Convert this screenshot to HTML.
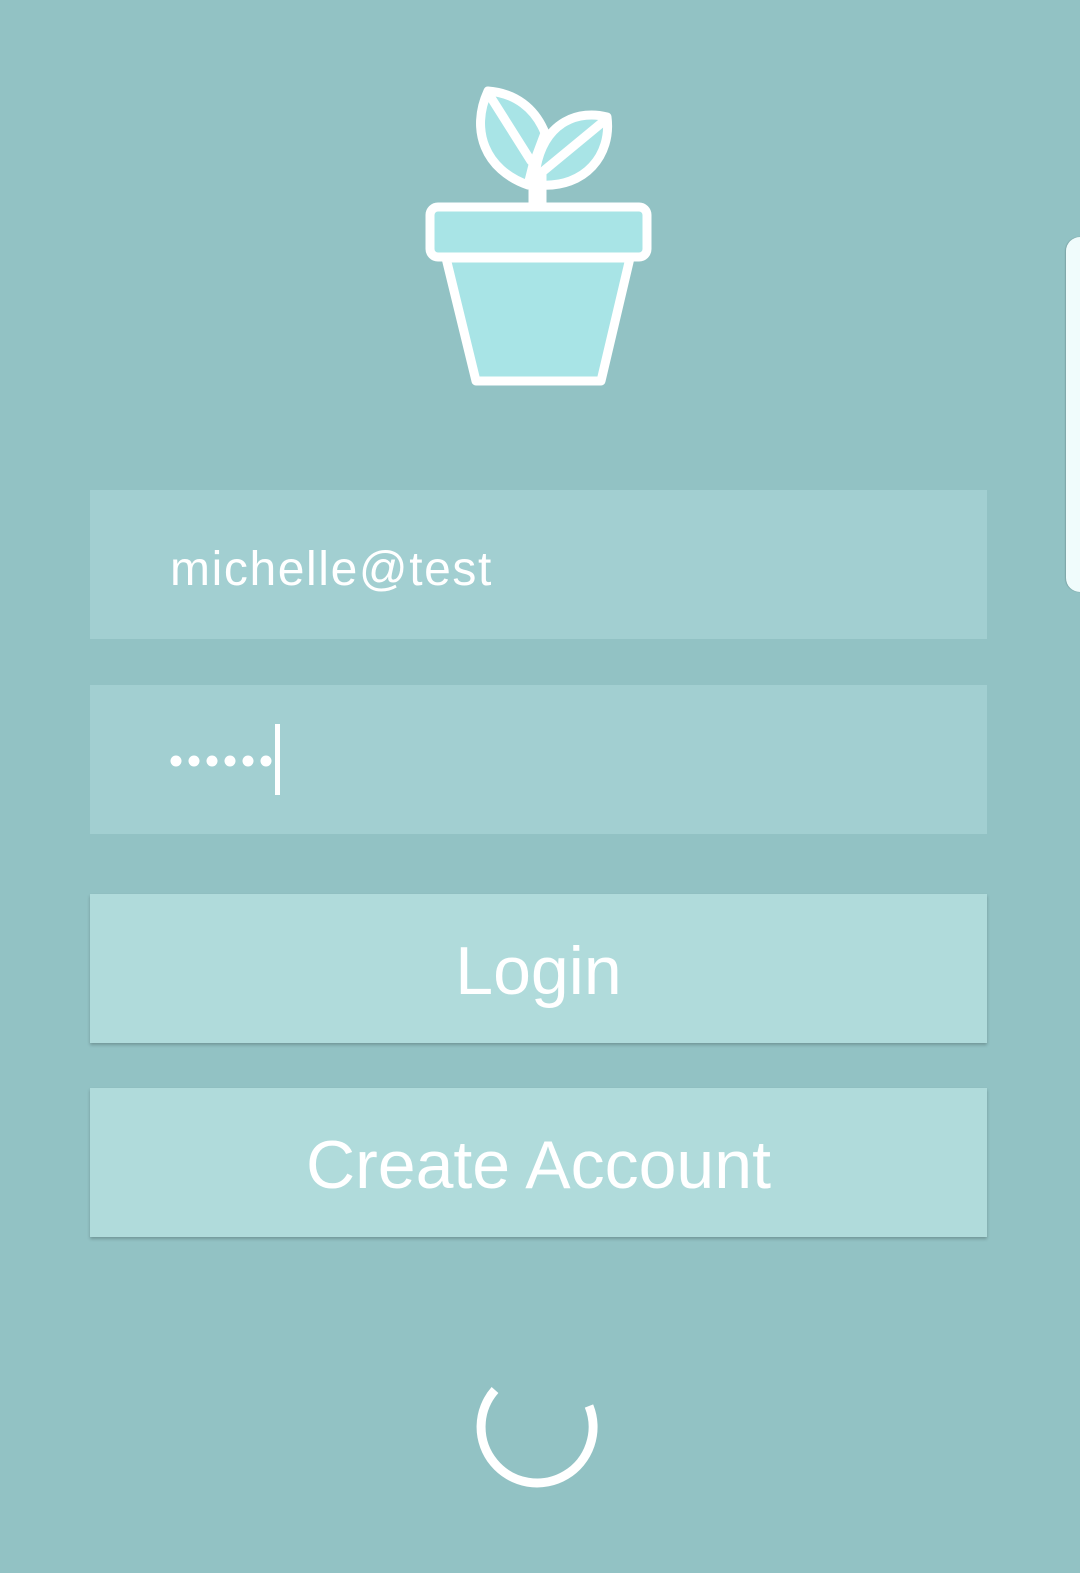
<!DOCTYPE html>
<html><head><style>
html,body{margin:0;padding:0}
body{width:1080px;height:1573px;background:#92c2c4;position:relative;overflow:hidden;font-family:"Liberation Sans",sans-serif;color:#fff}
.f{position:absolute;left:90px;width:897px;height:149px;background:#a2cfd1}
.b{position:absolute;left:90px;width:897px;height:149px;background:#b0dbdb;box-shadow:0 2px 3px rgba(0,0,0,.22);text-align:center;line-height:155px;font-size:68px}
.side{position:absolute;left:1066px;top:237px;width:20px;height:355px;background:#f0fcfc;border-radius:14px 0 0 14px;box-shadow:-1px 0 1px rgba(0,0,0,.15)}
</style></head><body>
<svg width="1080" height="1573" style="position:absolute;left:0;top:0">
<g stroke="#fff" stroke-width="9" stroke-linejoin="round" stroke-linecap="round" fill="#a8e4e6">
<path d="M488,91 C470,130 485,170 528,185 L533,165 L545,133 C535,108 515,93 488,91 Z"/>
<path d="M490,96 L531,161" fill="none"/>
<path d="M607,117 C580,110 545,120 536,168 L540,185 C585,188 612,155 607,117 Z"/>
<path d="M604,121 L541,173" fill="none"/>
<path d="M533,165 L533,203 M542,172 L542,203" fill="none"/>
<path d="M446,258 L476,381 L601,381 L630,258 Z"/>
<rect x="430" y="207" width="217" height="50" rx="8"/>
</g>
</svg>
<div class="side"></div>
<div class="f" style="top:490px"><div style="position:absolute;left:80px;top:52px;font-size:48px;letter-spacing:1.6px">michelle@test</div></div>
<div class="f" style="top:685px"><div style="position:absolute;left:185px;top:39px;width:5px;height:71px;background:#fff"></div></div>
<div class="b" style="top:894px">Login</div>
<div class="b" style="top:1088px">Create Account</div>
<svg width="1080" height="1573" style="position:absolute;left:0;top:0">
<circle cx="176" cy="761" r="5.5" fill="#fff"/><circle cx="194" cy="761" r="5.5" fill="#fff"/><circle cx="212" cy="761" r="5.5" fill="#fff"/><circle cx="230" cy="761" r="5.5" fill="#fff"/><circle cx="248" cy="761" r="5.5" fill="#fff"/><circle cx="266" cy="761" r="5.5" fill="#fff"/>
<path d="M495,1390 A56,56 0 1 0 589,1406" fill="none" stroke="#fff" stroke-width="9"/>
</svg>
</body></html>
